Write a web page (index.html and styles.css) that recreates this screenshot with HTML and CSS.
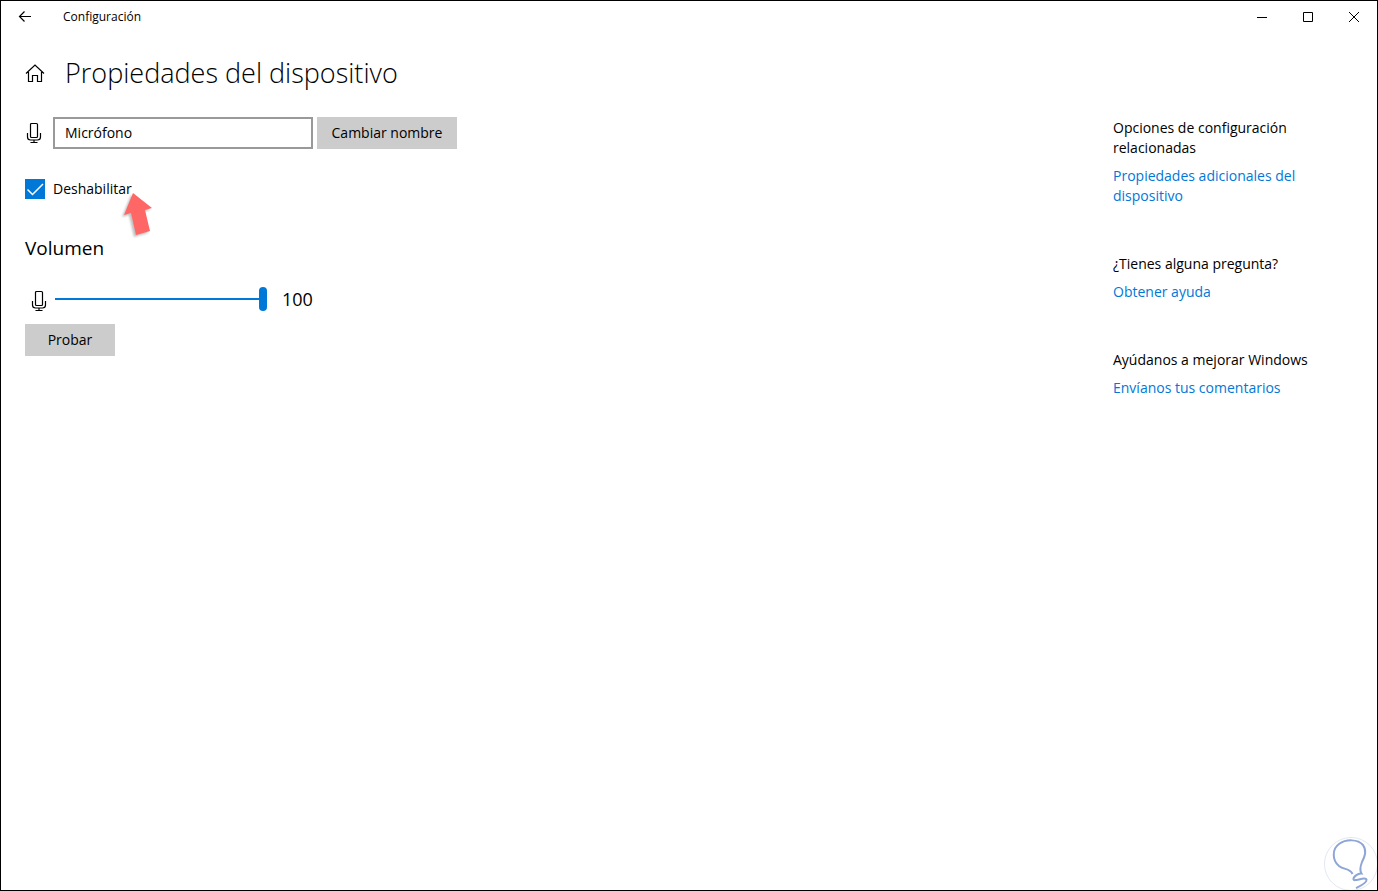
FILE: index.html
```html
<!DOCTYPE html>
<html lang="es">
<head>
  <meta charset="UTF-8">
  <meta name="viewport" content="width=device-width,initial-scale=1">
  <title>Configuración</title>
  <link rel="stylesheet" href="styles.css">
</head>
<body>

  <!-- Shared icons -->
  <svg class="defs" aria-hidden="true">
    <symbol id="mic" viewBox="0 0 16 22">
      <rect x="4.5" y="1.5" width="7" height="14" rx="1"/>
      <path d="M1.5 11v4q0 3 3 3h7q3 0 3-3v-4M8 18v2.5M4.5 20.5h7"/>
    </symbol>
  </svg>

  <header class="titlebar">
    <button class="back" aria-label="Atrás">
      <svg width="14" height="12" viewBox="0 0 14 12"><path d="M13 5.5H1.5M6.5.5l-5 5 5 5"/></svg>
    </button>
    <span class="app-name">Configuración</span>
    <div class="win-btns">
      <button aria-label="Minimizar"><svg width="10" height="10"><path d="M0 5.5h10"/></svg></button>
      <button aria-label="Maximizar"><svg width="10" height="10"><path d="M.5.5h9v9h-9z"/></svg></button>
      <button aria-label="Cerrar"><svg width="10" height="10"><path d="M0 0l10 10M10 0L0 10"/></svg></button>
    </div>
  </header>

  <div class="heading">
    <a href="#" class="home" aria-label="Inicio">
      <svg width="20" height="18" viewBox="0 0 20 18"><path d="M1 9.5L10 1l9 8.5M3.5 8v9.5h4v-6h5v6h4V8"/></svg>
    </a>
    <h1>Propiedades del dispositivo</h1>
  </div>

  <div class="columns">
    <main>
      <form class="name-row">
        <svg class="mic"><use href="#mic"/></svg>
        <input type="text" value="Micrófono" aria-label="Nombre del dispositivo">
        <button type="button" class="btn">Cambiar nombre</button>
      </form>

      <div class="disable-row">
        <label class="check">
          <input type="checkbox" checked>
          <svg width="20" height="20"><path d="M2.5 10.5l5 5L18 5"/></svg>
          Deshabilitar
        </label>
        <svg class="pointer" width="36" height="48" viewBox="0 0 36 48">
          <path d="M13 3l19 15-7 2 5 21-14 4-5-22-7 2z"/>
        </svg>
      </div>

      <h2>Volumen</h2>
      <div class="volume">
        <svg class="mic"><use href="#mic"/></svg>
        <input type="range" min="0" max="100" value="100" aria-label="Volumen">
        <output>100</output>
      </div>
      <button type="button" class="btn test">Probar</button>
    </main>

    <aside>
      <section>
        <h3>Opciones de configuración relacionadas</h3>
        <a href="#">Propiedades adicionales del dispositivo</a>
      </section>
      <section>
        <h3>¿Tienes alguna pregunta?</h3>
        <a href="#">Obtener ayuda</a>
      </section>
      <section>
        <h3>Ayúdanos a mejorar Windows</h3>
        <a href="#">Envíanos tus comentarios</a>
      </section>
    </aside>
  </div>

  <!-- Corner mark -->
  <svg class="mark" width="54" height="54" viewBox="0 0 54 54">
    <circle cx="27" cy="27" r="26.5"/>
    <path d="M28.5 37C26 31 20 33 15 29C8 23 8 12 15 7C22 2 34 2 39 8C43 14 41 19 38 25C36 30 36 34 37.500 36.500C34 36 29 40 29.500 42.500C30 45 42 39 42.500 43C43 46 36 49 32 51"/>
  </svg>

</body>
</html>
```

FILE: styles.css
```css
*{box-sizing:border-box}
body{margin:0;min-height:100vh;border:1px solid #000;background:#fff;color:#000;position:relative;
     font:14px/20px 'Open Sans','Segoe UI',sans-serif}
button,input{font:inherit;color:inherit}
svg{fill:none;stroke:#000;display:block}
.defs{position:absolute;width:0;height:0}

/* Title bar */
.titlebar{display:flex;align-items:center;height:32px}
.titlebar button{display:flex;align-items:center;justify-content:center;height:32px;padding:0;
                 border:0;background:none}
.titlebar .back{width:48px}
.back svg,.home svg{stroke-width:1.2}
.app-name{margin-left:14px;font-size:12px}
.win-btns{display:flex;margin-left:auto}
.win-btns button{width:46px}

.heading{display:flex;align-items:center;gap:20px;padding:20px 24px 0}
h1{margin:0;font-size:27px;line-height:40px;font-weight:300}

.columns{display:flex;justify-content:space-between;padding:24px 0 0 24px}
aside{width:264px;padding:1px 60px 0 0}

/* Device name */
.mic{width:16px;height:22px;flex:none;stroke-width:1.2}
.name-row{display:flex;align-items:center;gap:4px}
.name-row .mic{margin:0 7px 0 1px}
.name-row input{width:260px;height:32px;padding:0 10px 2px;border:2px solid #999;border-radius:0;background:#fff}
.btn{height:32px;padding:0;width:140px;border:0;background:#ccc}

.disable-row{display:flex;margin-top:30px;position:relative}
.check{display:flex;align-items:center;gap:8px}
.check input{appearance:none;position:absolute;width:20px;height:20px;margin:0}
.check svg{stroke:#fff;background:#0078d7;stroke-width:1.5}
.pointer{position:absolute;left:95px;top:11px;fill:#f66;stroke:none;
         filter:drop-shadow(-2px 2px 1px rgba(0,0,0,.25))}

/* Volume */
h2{margin:35px 0 0;font-size:19px;line-height:28px;font-weight:400}
.volume{display:flex;align-items:center;margin-top:21px;height:32px}
.volume .mic{margin:4px 8px 0 6px}
.volume input{appearance:none;width:212px;height:24px;margin:0;
              background:linear-gradient(#0078d7,#0078d7) center/100% 2px no-repeat}
.volume input::-webkit-slider-thumb{appearance:none;width:8px;height:24px;border-radius:4px;background:#0078d7}
.volume output{margin-left:15px;font-size:18px}
.test{width:90px;margin-top:9px}

/* Related links */
section{margin-bottom:48px}
h3{margin:0 0 8px;font-size:14px;font-weight:400}
aside a{color:#0078d7;text-decoration:none}

.mark{position:absolute;right:-1px;bottom:-1px;stroke:#8ea6d6;stroke-width:2}
.mark circle{stroke:#e2e7f3;stroke-width:1}
@media(max-width:760px){
  .columns{flex-direction:column;gap:40px}
}
```
